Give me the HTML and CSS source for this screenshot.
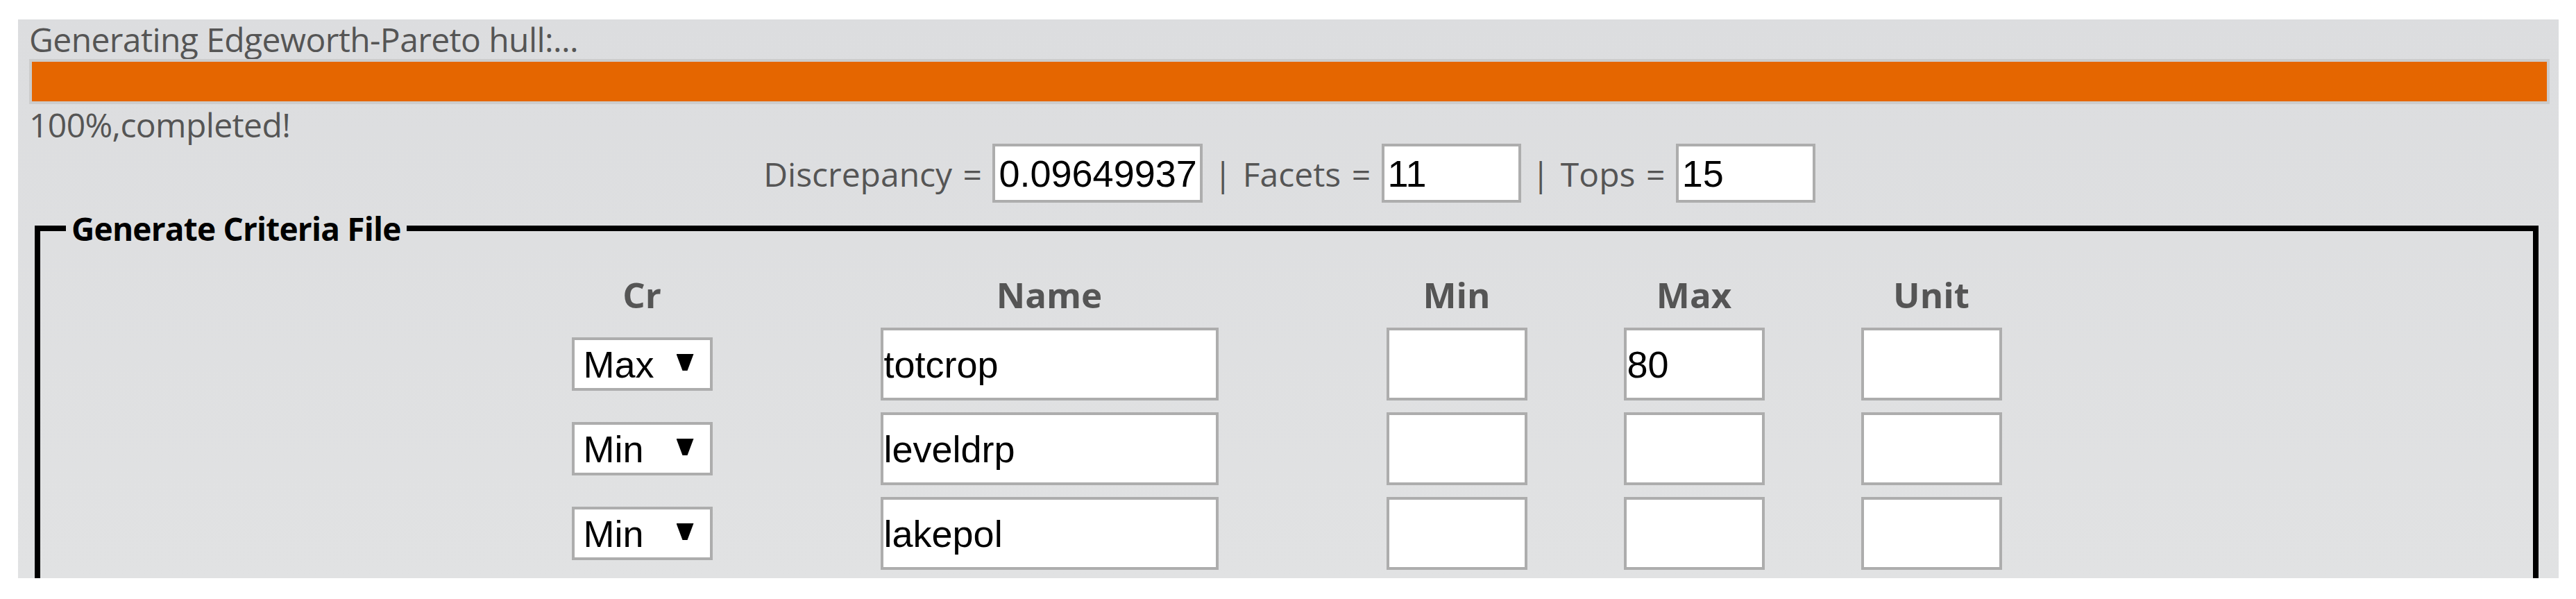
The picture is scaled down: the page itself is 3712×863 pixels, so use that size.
FILE: index.html
```html
<!DOCTYPE html>
<html>
<head>
<meta charset="utf-8">
<title>Edgeworth-Pareto hull</title>
<link rel="stylesheet" href="styles.css">
</head>
<body>
<div class="panel">
  <div class="status">Generating Edgeworth-Pareto hull:...</div>
  <div class="track"><div class="fill" style="width:100%"></div></div>
  <div class="status done">100%,completed!</div>
  <div class="stats">Discrepancy = <input class="field wide" type="text" value="0.09649937"> | Facets = <input class="field" type="text" value="11"> | Tops = <input class="field" type="text" value="15"></div>
  <div class="clip">
    <fieldset class="criteria">
      <legend>Generate Criteria File</legend>
      <div class="grid">
        <div class="head">Cr</div>
        <div class="head">Name</div>
        <div class="head">Min</div>
        <div class="head">Max</div>
        <div class="head">Unit</div>

        <span class="sel"><select><option selected>Max</option><option>Min</option></select></span>
        <input class="cell name" type="text" value="totcrop">
        <input class="cell" type="text" value="">
        <input class="cell" type="text" value="80">
        <input class="cell" type="text" value="">

        <span class="sel"><select><option>Max</option><option selected>Min</option></select></span>
        <input class="cell name" type="text" value="leveldrp">
        <input class="cell" type="text" value="">
        <input class="cell" type="text" value="">
        <input class="cell" type="text" value="">

        <span class="sel"><select><option>Max</option><option selected>Min</option></select></span>
        <input class="cell name" type="text" value="lakepol">
        <input class="cell" type="text" value="">
        <input class="cell" type="text" value="">
        <input class="cell" type="text" value="">
      </div>
    </fieldset>
  </div>
</div>
</body>
</html>
```
FILE: styles.css
```css
html, body {
  margin: 0;
  padding: 0;
  background: #ffffff;
}

.panel {
  box-sizing: border-box;
  display: flex;
  flex-direction: column;
  margin: 28px 25px 0 26px;
  height: 805px;
  padding: 4px 13px 0 16px;
  background: linear-gradient(#dcdddf, #e1e2e3);
  font-family: "Open Sans", "Noto Sans", sans-serif;
  font-size: 48px;
  line-height: 50px;
  color: #555555;
}

.status {
  letter-spacing: -0.6px;
}

.track {
  box-sizing: border-box;
  margin-top: 3px;
  height: 65px;
  flex: none;
  padding: 4px;
  background: #cccccc;
}

.fill {
  height: 100%;
  background: #e56600;
}

.done {
  margin-top: 5px;
}

.stats {
  margin-top: 2px;
  text-align: center;
  word-spacing: 3px;
}

.field {
  box-sizing: border-box;
  width: 201px;
  height: 85px;
  margin: 0;
  padding: 0 5px;
  border: 4px solid #adadad;
  background: #ffffff;
  font-family: "Liberation Sans", Arial, sans-serif;
  font-size: 54px;
  color: #000000;
  letter-spacing: 0;
  word-spacing: 0;
  vertical-align: baseline;
}

.field.wide {
  width: 303px;
}

.clip {
  flex: 1;
  min-height: 0;
  overflow: hidden;
}

.criteria {
  margin: 14px 16px 0 8px;
  padding: 47px 0 60px 0;
  border: 8px solid #000000;
  min-width: 0;
}

.criteria legend {
  margin-left: 37px;
  padding: 0 8px;
  font-size: 46px;
  line-height: 46px;
  font-weight: bold;
  color: #000000;
  letter-spacing: -0.8px;
}

.grid {
  display: grid;
  grid-template-columns: 203px 693px 203px 203px 203px;
  column-gap: 139px;
  row-gap: 17px;
  justify-content: center;
  justify-items: center;
  align-items: center;
}

.head {
  font-size: 51px;
  line-height: 50px;
  font-weight: bold;
  color: #555555;
  margin-bottom: 6px;
}

.cell {
  box-sizing: border-box;
  width: 203px;
  height: 105px;
  margin: 0;
  padding: 0 1px;
  border: 4px solid #adadad;
  background: #ffffff;
  font-family: "Liberation Sans", Arial, sans-serif;
  font-size: 54px;
  color: #000000;
}

.cell.name {
  width: 487px;
}

.sel {
  position: relative;
  display: inline-block;
  width: 203px;
  height: 77px;
}

.sel select {
  -webkit-appearance: none;
  appearance: none;
  box-sizing: border-box;
  width: 203px;
  height: 77px;
  margin: 0;
  padding: 0 0 0 13px;
  border: 4px solid #adadad;
  border-radius: 0;
  background: #ffffff;
  font-family: "Liberation Sans", Arial, sans-serif;
  font-size: 54px;
  color: #000000;
}

.sel::after {
  content: "";
  position: absolute;
  top: 24px;
  right: 27px;
  width: 25px;
  height: 24px;
  background: #000000;
  clip-path: polygon(0 0, 100% 0, 64% 100%, 36% 100%);
  pointer-events: none;
}
```
